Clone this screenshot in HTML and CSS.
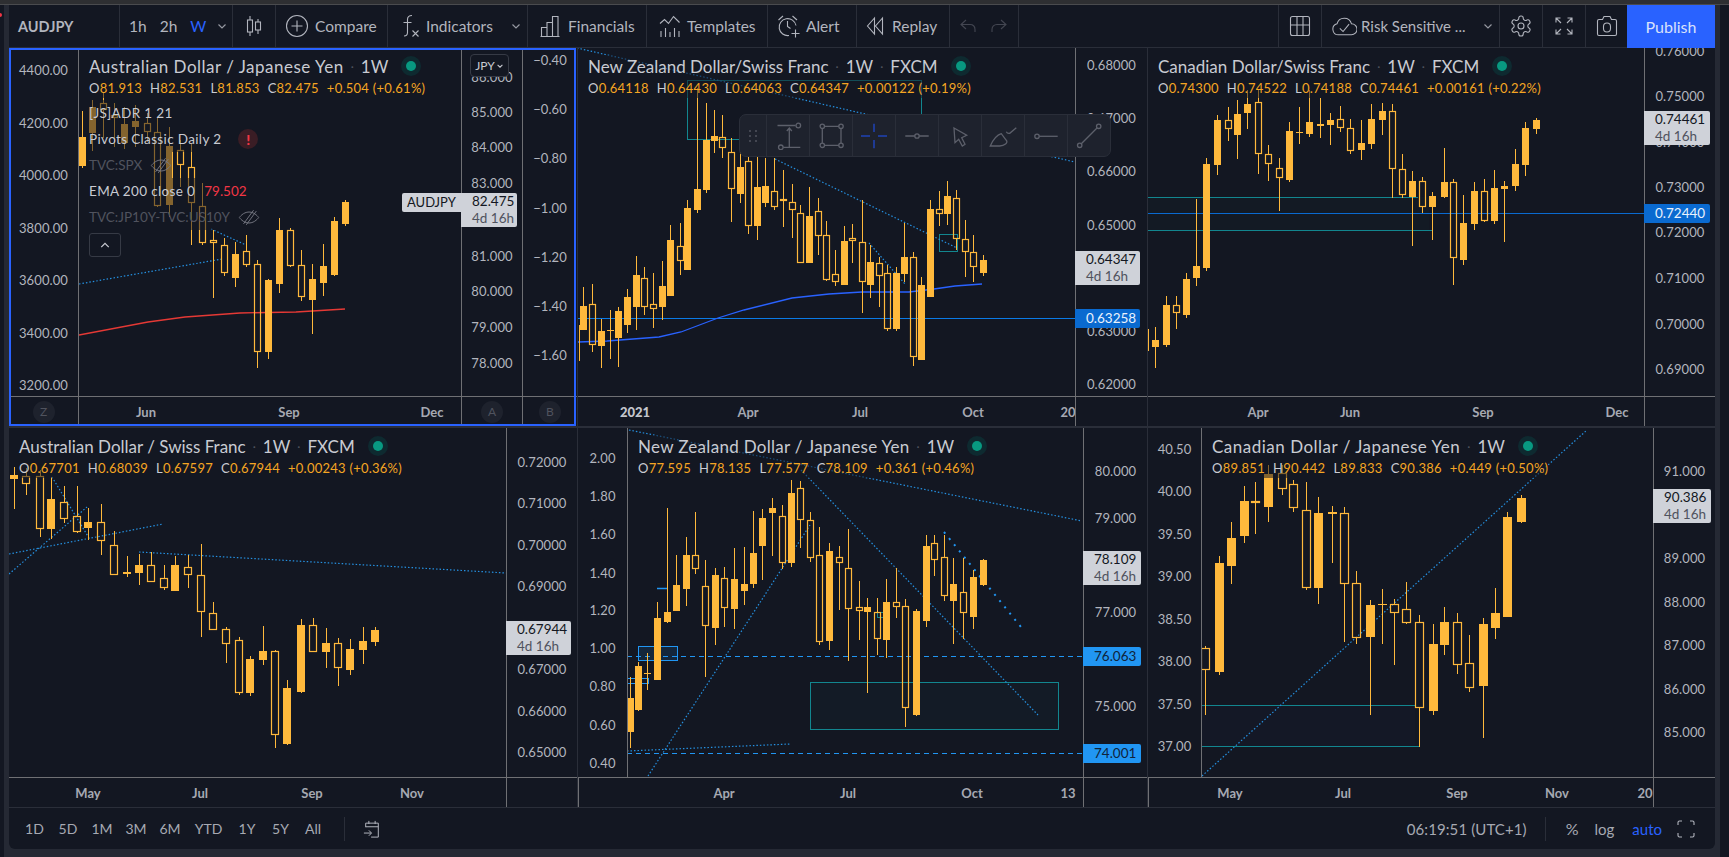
FILE: index.html
```html
<!DOCTYPE html>
<html lang="en">
<head>
<meta charset="utf-8">
<title>AUDJPY multi-chart layout</title>
<link rel="stylesheet" href="styles.css">
</head>
<body>
<div class="app">
  <div class="top-strip"></div>
  <span class="edge-badge"></span>
  <div class="workspace">
  <header class="toolbar">
    <div class="cell sym">AUDJPY</div>
    <div class="cell intervals"><span>1h</span><span>2h</span><span class="on">W</span>
      <svg class="chev" viewBox="0 0 10 10"><path d="M1.500 3.500L5 7l3.500-3.500"/></svg></div>
    <div class="cell mid"><svg class="ic" viewBox="0 0 24 24"><path d="M8 2v4M8 18v4M16 5v3M16 16v4"/><rect x="5.500" y="6" width="5" height="12"/><rect x="13.500" y="8" width="5" height="8"/></svg></div>
    <div class="cell compare"><svg class="ic" viewBox="0 0 24 24"><circle cx="12" cy="12" r="10.500"/><path d="M12 6.500v11M6.500 12h11"/></svg><span>Compare</span></div>
    <div class="cell indicators"><svg class="ic" viewBox="0 0 24 24"><path d="M15 1.500c-3.500 0-4.500 1.500-4.500 4v13c0 2.500-1 3.500-3.500 3.500M6.500 8.500h8M15.500 16.500l6 6M21.500 16.500l-6 6"/></svg><span>Indicators</span>
      <svg class="chev push" viewBox="0 0 10 10"><path d="M1.500 3.500L5 7l3.500-3.500"/></svg></div>
    <div class="cell financials"><svg class="ic" viewBox="0 0 24 24"><path d="M2.500 22.500h19M3.500 22.500v-9h5.500v9M9 22.500v-14h5.500v14M14.500 22.500v-20h5.500v20"/></svg><span>Financials</span></div>
    <div class="cell templates"><svg class="ic" viewBox="0 0 24 24"><path d="M2 9.500l4.500-4 4 4 5-7 6 6M3 23v-6M7.500 23v-9M12 23v-5M16.500 23v-9M21 23v-6"/></svg><span>Templates</span></div>
    <div class="cell alert"><svg class="ic" viewBox="0 0 24 24"><path d="M19 11.500a8.500 8.500 0 1 0-7 10M1.500 6l4.500-4M20 6l-4.500-4M10.500 7v5.500l3 2M18.500 15.500v8M14.500 19.500h8"/></svg><span>Alert</span></div>
    <div class="cell replay"><svg class="ic small" viewBox="0 0 18 24"><path d="M8.500 4L1.500 12l7 8zM16.500 4l-7 8 7 8z"/></svg><span>Replay</span></div>
    <div class="cell undo"><svg class="ic small mute" viewBox="0 0 18 24"><path d="M7 6L2 10.500l5 4.500M2 10.500h9c3 0 5 2 5 5v2.500"/></svg><svg class="ic small mute" viewBox="0 0 18 24"><path d="M11 6l5 4.500-5 4.500M16 10.500H7c-3 0-5 2-5 5v2.500"/></svg></div>
    <div class="cell spacer"></div>
    <div class="cell mid"><svg class="ic" viewBox="0 0 24 24"><rect x="2.500" y="2.500" width="19" height="19" rx="2"/><path d="M9 2.500v19M15 2.500v19M2.500 11h19"/></svg></div>
    <div class="cell layout"><svg class="ic wide" viewBox="0 0 28 24"><path d="M8 21.500a6 6 0 0 1-1.500-11.800A8 8 0 0 1 22 9.500a6 6 0 0 1 0 12zM9.500 14.500l3.500 3.500 6.500-8"/></svg><span>Risk Sensitive ...</span>
      <svg class="chev push" viewBox="0 0 10 10"><path d="M1.500 3.500L5 7l3.500-3.500"/></svg></div>
    <div class="cell mid"><svg class="ic" viewBox="0 0 24 24"><path d="M12.220 2h-.44a2 2 0 0 0-2 2v.18a2 2 0 0 1-1 1.730l-.43.25a2 2 0 0 1-2 0l-.15-.08a2 2 0 0 0-2.730.73l-.22.38a2 2 0 0 0 .73 2.730l.15.1a2 2 0 0 1 1 1.720v.51a2 2 0 0 1-1 1.740l-.15.09a2 2 0 0 0-.73 2.730l.22.38a2 2 0 0 0 2.730.73l.15-.08a2 2 0 0 1 2 0l.43.25a2 2 0 0 1 1 1.730V20a2 2 0 0 0 2 2h.44a2 2 0 0 0 2-2v-.18a2 2 0 0 1 1-1.730l.43-.25a2 2 0 0 1 2 0l.15.08a2 2 0 0 0 2.730-.73l.22-.39a2 2 0 0 0-.73-2.730l-.15-.08a2 2 0 0 1-1-1.740v-.5a2 2 0 0 1 1-1.740l.15-.09a2 2 0 0 0 .73-2.730l-.22-.38a2 2 0 0 0-2.730-.73l-.15.08a2 2 0 0 1-2 0l-.43-.25a2 2 0 0 1-1-1.730V4a2 2 0 0 0-2-2z"/><circle cx="12" cy="12" r="3"/></svg></div>
    <div class="cell mid"><svg class="ic" viewBox="0 0 24 24"><path d="M4 8.500V4h4.500M4 4l5 5M20 8.500V4h-4.500M20 4l-5 5M4 15.500V20h4.500M4 20l5-5M20 15.500V20h-4.500M20 20l-5-5"/></svg></div>
    <div class="cell mid"><svg class="ic" viewBox="0 0 24 24"><path d="M4 5.500h3.500L9 2.500h6l1.500 3H20a1.500 1.500 0 0 1 1.500 1.500v13a1.500 1.500 0 0 1-1.500 1.500H4A1.500 1.500 0 0 1 2.500 20V7A1.500 1.500 0 0 1 4 5.500z"/><rect x="8.500" y="9" width="7" height="9" rx="3.500"/></svg></div>
    <div class="cell publish">Publish</div>
  </header>

  <main class="charts">
    <section class="pane pane-a is-active" id="audjpy">
      <div class="axis left"></div>
      <div class="plot"><svg class="canvas"></svg>
        <div class="legend">
          <div class="lg-row lg-title"><span>Australian Dollar / Japanese Yen</span><i>·</i><span>1W</span><em class="dot"></em></div>
          <div class="lg-row lg-vals"><span><b>O</b>81.913</span><span><b>H</b>82.531</span><span><b>L</b>81.853</span><span><b>C</b>82.475</span><span>+0.504 (+0.61%)</span></div>
          <div class="lg-row lg-study">[JS]ADR 1 21</div>
          <div class="lg-row lg-study">Pivots Classic Daily 2<em class="warn">!</em></div>
          <div class="lg-row lg-study hidden">TVC:SPX<svg class="eye" viewBox="0 0 24 18"><path d="M1.500 9S5.500 3 12 3s10.500 6 10.500 6-4 6-10.500 6S1.500 9 1.500 9zM6 16L17 1M9 17L20 2"/></svg></div>
          <div class="lg-row lg-study">EMA 200 close 0<span class="red">79.502</span></div>
          <div class="lg-row lg-study hidden">TVC:JP10Y-TVC:US10Y<svg class="eye" viewBox="0 0 24 18"><path d="M1.500 9S5.500 3 12 3s10.500 6 10.500 6-4 6-10.500 6S1.500 9 1.500 9zM6 16L17 1M9 17L20 2"/></svg></div>
          <button class="collapse" type="button"><svg viewBox="0 0 12 8"><path d="M1.500 6L6 1.500 10.500 6"/></svg></button>
        </div>
      </div>
      <div class="axis"></div>
      <div class="axis"></div>
      <div class="corner"><span class="pin">Z</span></div>
      <div class="time"></div>
      <div class="corner"><span class="pin">A</span></div>
      <div class="corner"><span class="pin">B</span></div>
      <div class="jpy">JPY<svg viewBox="0 0 10 10"><path d="M2 3.500L5 6.500l3-3"/></svg></div>
    </section>

    <section class="pane pane-b" id="nzdchf">
      <div class="plot"><svg class="canvas"></svg>
        <div class="legend">
          <div class="lg-row lg-title"><span>New Zealand Dollar/Swiss Franc</span><i>·</i><span>1W</span><i>·</i><span>FXCM</span><em class="dot"></em></div>
          <div class="lg-row lg-vals"><span><b>O</b>0.64118</span><span><b>H</b>0.64430</span><span><b>L</b>0.64063</span><span><b>C</b>0.64347</span><span>+0.00122 (+0.19%)</span></div>
        </div>
      </div>
      <div class="axis"></div>
      <div class="time"></div>
      <div class="corner"></div>
    </section>

    <section class="pane pane-c" id="cadchf">
      <div class="plot"><svg class="canvas"></svg>
        <div class="legend">
          <div class="lg-row lg-title"><span>Canadian Dollar/Swiss Franc</span><i>·</i><span>1W</span><i>·</i><span>FXCM</span><em class="dot"></em></div>
          <div class="lg-row lg-vals"><span><b>O</b>0.74300</span><span><b>H</b>0.74522</span><span><b>L</b>0.74188</span><span><b>C</b>0.74461</span><span>+0.00161 (+0.22%)</span></div>
        </div>
      </div>
      <div class="axis"></div>
      <div class="time"></div>
      <div class="corner"></div>
    </section>

    <section class="pane pane-d lower" id="audchf">
      <div class="plot"><svg class="canvas"></svg>
        <div class="legend">
          <div class="lg-row lg-title"><span>Australian Dollar / Swiss Franc</span><i>·</i><span>1W</span><i>·</i><span>FXCM</span><em class="dot"></em></div>
          <div class="lg-row lg-vals"><span><b>O</b>0.67701</span><span><b>H</b>0.68039</span><span><b>L</b>0.67597</span><span><b>C</b>0.67944</span><span>+0.00243 (+0.36%)</span></div>
        </div>
      </div>
      <div class="axis"></div>
      <div class="time"></div>
      <div class="corner"></div>
    </section>

    <section class="pane pane-e lower" id="nzdjpy">
      <div class="axis left"></div>
      <div class="plot"><svg class="canvas"></svg>
        <div class="legend">
          <div class="lg-row lg-title"><span>New Zealand Dollar / Japanese Yen</span><i>·</i><span>1W</span><em class="dot"></em></div>
          <div class="lg-row lg-vals"><span><b>O</b>77.595</span><span><b>H</b>78.135</span><span><b>L</b>77.577</span><span><b>C</b>78.109</span><span>+0.361 (+0.46%)</span></div>
        </div>
      </div>
      <div class="axis"></div>
      <div class="corner"></div>
      <div class="time"></div>
      <div class="corner"></div>
    </section>

    <section class="pane pane-f lower" id="cadjpy">
      <div class="axis left"></div>
      <div class="plot"><svg class="canvas"></svg>
        <div class="legend">
          <div class="lg-row lg-title"><span>Canadian Dollar / Japanese Yen</span><i>·</i><span>1W</span><em class="dot"></em></div>
          <div class="lg-row lg-vals"><span><b>O</b>89.851</span><span><b>H</b>90.442</span><span><b>L</b>89.833</span><span><b>C</b>90.386</span><span>+0.449 (+0.50%)</span></div>
        </div>
      </div>
      <div class="axis"></div>
      <div class="corner"></div>
      <div class="time"></div>
      <div class="corner"></div>
    </section>

    <div class="draw-tools">
      <div class="tool grip"><svg viewBox="0 0 10 14"><path d="M1 1h2v2H1zM7 1h2v2H7zM1 6h2v2H1zM7 6h2v2H7zM1 11h2v2H1zM7 11h2v2H7z"/></svg></div>
      <div class="tool"><svg viewBox="0 0 28 28"><path d="M3.500 3.500h18M15.300 24.800V6M12.800 9l2.500-3 2.500 3M9.300 25.300h17"/><circle cx="24.300" cy="3.500" r="2.300"/><circle cx="6.800" cy="25.300" r="2.300"/></svg></div>
      <div class="tool"><svg viewBox="0 0 28 28"><path d="M7.500 4.300h14.300M7.500 23.300h14.300M5.300 6.500v14.500M24 6.500v14.500"/><circle cx="5.300" cy="4.300" r="2.200"/><circle cx="24" cy="4.300" r="2.200"/><circle cx="5.300" cy="23.300" r="2.200"/><circle cx="24" cy="23.300" r="2.200"/></svg></div>
      <div class="tool"><svg class="cross" viewBox="0 0 28 28"><path d="M14 1.700V10M14 18v8.300M1 14h9M18 14h9"/></svg></div>
      <div class="tool"><svg viewBox="0 0 28 28"><path d="M2.300 14h9.500M16.200 14h9.500"/><circle cx="14" cy="14" r="2.200"/></svg></div>
      <div class="tool"><svg viewBox="0 0 28 28"><path d="M8 6l12.700 7.300-5 2.400 3.300 6.600-2.700 1.700-3.600-6.700-3.700 3.400z"/></svg></div>
      <div class="tool"><svg viewBox="0 0 28 28"><path d="M1.300 24h9.400c4.600 0 8.800-3.300 6.600-5.700l-5-6.600C8 13 3.500 19 1.300 24zM17.300 9.700c.6 1.200 1.800 2 3.400 1.600l6.600-5.600"/></svg></div>
      <div class="tool"><svg viewBox="0 0 28 28"><path d="M7.200 14.300h18.500"/><circle cx="5" cy="14.300" r="2.200"/></svg></div>
      <div class="tool"><svg viewBox="0 0 28 28"><path d="M6.300 21.700L22 6"/><circle cx="4.700" cy="23.300" r="2.200"/><circle cx="23.700" cy="4.300" r="2.200"/></svg></div>
    </div>
  </main>

  <footer class="bottom">
    <nav class="ranges"><span>1D</span><span>5D</span><span>1M</span><span>3M</span><span>6M</span><span>YTD</span><span>1Y</span><span>5Y</span><span>All</span></nav>
    <div class="bar-div"></div>
    <svg class="ic cal" viewBox="0 0 20 20"><path d="M3 8V3.500h14V19h-8M3 7.500h14M6.500 1v3.500M13.500 1v3.500M1 14.500h8M6.500 11.500l3 3-3 3"/></svg>
    <div class="bottom-right">
      <span class="clock">06:19:51 (UTC+1)</span>
      <div class="bar-div"></div>
      <span class="pct">%</span><span class="log">log</span><span class="on auto">auto</span>
      <svg class="ic full" viewBox="0 0 20 20"><path d="M2 6V3.500A1.500 1.500 0 0 1 3.500 2H6M14 2h2.500A1.500 1.500 0 0 1 18 3.500V6M18 14v2.500a1.500 1.500 0 0 1-1.500 1.500H14M6 18H3.500A1.500 1.500 0 0 1 2 16.500V14"/></svg>
    </div>
  </footer>
  </div>
</div>
<script src="app.js"></script>
</body>
</html>
```
FILE: styles.css
```css
* { box-sizing: border-box; }
html, body { margin: 0; height: 100%; }
body {
  background: #131722;
  color: #b2b5be;
  font-family: Lato, "Noto Sans", sans-serif;
  overflow: hidden;
}
.app { position: relative; width: 1729px; height: 857px; display: flex; flex-direction: column; }
.top-strip { height: 5px; background: #2e2f32; border-bottom: 1px solid #4a4b4e; flex: none; }
.edge-badge { position: absolute; left: -2px; top: 13px; width: 4px; height: 4px; border-radius: 50%; background: #f23645; }
.workspace {
  flex: 1;
  margin: 0 9px 0 4px;
  padding: 0 5px 8px;
  background: #252934;
  display: flex;
  flex-direction: column;
}

/* top toolbar */
.toolbar {
  height: 43px;
  flex: none;
  background: #131722;
  border-bottom: 1px solid #2a2e39;
  display: grid;
  grid-template-columns: 110px 113px 43px 112px 140px 119px 121px 89px 93px 69px 1fr 43px 178px 43px 43px 42px 88px;
  font-size: 15.500px;
}
.cell { display: flex; align-items: center; border-left: 1px solid #2a2e39; padding-left: 9px; color: #b2b5be; }
.cell:first-child { border-left: 0; }
.sym { font-weight: 700; font-size: 14.500px; }
.intervals { gap: 13px; }
.on { color: #2962ff; }
.mid { justify-content: center; padding: 0; }
.spacer { border-left: 1px solid #2a2e39; }
.compare { gap: 6px; }
.indicators { gap: 5px; }
.financials { gap: 6px; padding-left: 10px; }
.templates { gap: 5px; padding-left: 11px; }
.alert { gap: 5px; }
.replay { gap: 8px; }
.undo { gap: 13px; }
.layout { gap: 4px; font-size: 15px; }
.layout .ic { width: 26px; }
.publish { background: #2962ff; color: #d8e1fb; justify-content: center; padding: 0; border: 0; font-size: 16px; margin-bottom: -1px; }
.ic { width: 24px; height: 24px; fill: none; stroke: #b2b5be; stroke-width: 1.100; flex: none; }
.ic.small { width: 18px; }
.ic.mute { stroke: #434651; }
.chev { width: 10px; height: 10px; fill: none; stroke: #9598a1; stroke-width: 1.200; flex: none; }
.push { margin-left: auto; margin-right: 6px; }
.intervals .chev { margin-left: -2px; }

/* chart grid */
.charts {
  position: relative;
  flex: none;
  height: 759px;
  display: grid;
  grid-template-columns: 568px 570px 568px;
  grid-template-rows: 378px 381px;
  background: #131722;
}
.pane { position: relative; display: grid; grid-template-rows: 1fr 30px; min-width: 0; background: #131722; }
.pane-b, .pane-c, .pane-e, .pane-f { border-left: 1px solid #2a2e39; }
.lower { border-top: 2px solid #2a2e39; }
.pane-a { grid-template-columns: 70px 382px 61px 55px; }
.pane-b { grid-template-columns: 1fr 72px; }
.pane-c { grid-template-columns: 1fr 71px; }
.pane-d { grid-template-columns: 1fr 71px; }
.pane-e { grid-template-columns: 50px 1fr 64px; }
.pane-f { grid-template-columns: 54px 1fr 62px; }
.is-active::after {
  content: "";
  position: absolute;
  inset: 0 1px 0 0;
  border: 2px solid #2962ff;
  pointer-events: none;
}
.plot { position: relative; min-width: 0; overflow: hidden; }
.canvas { display: block; width: 100%; height: 100%; }
.axis { position: relative; border-left: 1px solid #6f7074; overflow: hidden; font-size: 13px; letter-spacing: .1px; color: #b2b5be; }
.axis.left { border-left: 0; border-right: 1px solid #6f7074; }
.tick { position: absolute; left: 0; right: 0; text-align: center; line-height: 16px; transform: translateY(-8px); white-space: nowrap; }
.time { position: relative; border-top: 1px solid #6f7074; font-size: 13px; font-weight: 700; color: #a6a9b2; overflow: hidden; }
.time span { position: absolute; top: 7px; transform: translateX(-50%); line-height: 16px; }
.time .year { font-weight: 900; color: #c3c6cd; }
.corner { position: relative; border-top: 1px solid #6f7074; border-left: 1px solid #6f7074; display: flex; align-items: center; justify-content: center; }
.pane-a > .corner:nth-of-type(5), .pane-e > .corner:first-of-type, .pane-f > .corner:first-of-type { border-left: 0; border-right: 1px solid #6f7074; }
.pin { width: 22px; height: 22px; border-radius: 50%; background: #1e222d; color: #50535e; font-size: 12px; display: flex; align-items: center; justify-content: center; }

/* legend */
.legend { position: absolute; left: 10px; top: 7px; display: flex; flex-direction: column; align-items: flex-start; }
.lg-row { background: rgba(19, 23, 34, .52); display: flex; align-items: center; white-space: nowrap; }
.lg-title { height: 22px; font-size: 17px; color: #c9cbd2; gap: 7px; }
.lg-title i { font-style: normal; color: #50535e; font-size: 12px; }
.pane-a .lg-title span:first-child { letter-spacing: .5px; }
.pane-f .lg-title span:first-child { letter-spacing: .5px; }
.pane-e .lg-title span:first-child { letter-spacing: .3px; }
.lg-vals { height: 21px; font-size: 13px; color: #f5a623; gap: 8px; letter-spacing: .25px; }
.lg-vals b { font-weight: 400; color: #c9cbd2; }
.lg-study { height: 26px; font-size: 13.500px; color: #c9cbd2; gap: 11px; letter-spacing: .35px; }
.lg-study:nth-child(3) { margin-top: 2px; }
.hidden { color: #50535e; letter-spacing: 0; gap: 7px; }
.red { color: #f23645; margin-left: -2px; letter-spacing: 0; }
.dot { position: relative; width: 20px; height: 20px; border-radius: 50%; background: #0e2a30; margin-left: 6px; }
.dot::after { content: ""; position: absolute; left: 5px; top: 5px; width: 10px; height: 10px; border-radius: 50%; background: #089981; }
.warn { width: 20px; height: 20px; border-radius: 50%; background: #3a1d25; color: #f23645; font-style: normal; font-weight: 900; font-size: 14px; display: flex; align-items: center; justify-content: center; margin-left: 6px; }
.eye { width: 22px; height: 17px; fill: none; stroke: #787b86; stroke-width: 1; margin-left: 1px; }
.collapse { width: 32px; height: 24px; margin-top: 3px; padding: 0; background: #131722; border: 1px solid #363a45; border-radius: 3px; display: flex; align-items: center; justify-content: center; }
.collapse svg { width: 10px; height: 7px; fill: none; stroke: #c9cbd2; stroke-width: 1.500; }

/* price tags */
.jpy { position: absolute; left: 461px; top: 6px; width: 39px; height: 23px; background: #131722; border: 1px solid #363a45; border-radius: 4px; font-size: 12px; display: flex; align-items: center; justify-content: center; gap: 1px; color: #c9cbd2; z-index: 2; }
.jpy svg { width: 8px; height: 8px; fill: none; stroke: #c9cbd2; stroke-width: 1.300; }
.tag { position: absolute; z-index: 3; font-size: 13.500px; line-height: 17px; padding: 0 0 0 11px; color: #131722; white-space: nowrap; border-radius: 0 2px 2px 0; }
.tag small { display: block; font-size: 13.500px; color: #50535e; }
.tag.light { background: #cfd2d9; }
.tag.name { padding: 0 0 0 5px; border-radius: 2px 0 0 2px; font-size: 13px; line-height: 19px; }
.tag.blue { background: #0a6ad0; color: #eaf2fd; }
.tag.sky { background: #2196f3; color: #10233a; }

/* floating drawing tools */
.draw-tools {
  position: absolute;
  left: 730px;
  top: 66px;
  width: 372px;
  height: 43px;
  display: flex;
  background: #1e222d;
  border: 1px solid #2a2e39;
  border-radius: 7px;
  z-index: 5;
}
.tool { width: 43px; flex: none; display: flex; align-items: center; justify-content: center; border-left: 1px solid #2a2e39; }
.tool.grip { width: 26px; border-left: 0; }
.tool svg { width: 28px; height: 28px; fill: none; stroke: #5d606b; stroke-width: 1.300; }
.tool.grip svg { width: 10px; height: 14px; fill: #434651; stroke: none; }
.tool svg.cross { stroke: #1e3a94; stroke-width: 2; }

/* bottom bar */
.bottom {
  height: 42px;
  flex: none;
  background: #131722;
  border-top: 1px solid #2a2e39;
  border-radius: 0 0 6px 6px;
  display: flex;
  align-items: center;
  font-size: 14px;
  color: #a6a9b2;
}
.ranges { display: grid; grid-template-columns: 33px 34px 34px 34px 34px 43px 34px 33px 32px; margin-left: 9px; text-align: center; }
.bar-div { width: 1px; height: 24px; background: #2a2e39; margin: 0 18px 0 15px; }
.cal { width: 18px; height: 18px; }
.bottom-right { margin-left: auto; display: flex; align-items: center; gap: 15px; padding-right: 19px; font-size: 15px; }
.clock { letter-spacing: .1px; }
.bottom-right .bar-div { margin: 0 0 0 3px; }
.pct { font-size: 16px; margin-left: 5px; }
.log { margin-left: 1px; }
.auto { margin-left: 3px; }
.full { width: 20px; height: 20px; margin-left: -1px; }
```
FILE: app.js
```js
/* Candle rows: [x, high, bodyTop, bodyBottom, low, filled]. Coordinates are
   read off the chart image: page = origin + value / scale. */
var AMBER = '#ffb93c', TEAL = '#12868f', DOT = '#2590e0';

var CHARTS = {
  audjpy: {
    map: [0, 0, 1, 1], body: 7,
    candles: [
      [82,111,137,166,168,1],[92,100,107,133,151,1],[103,92,103,110,138,0],[114,103,115,118,147,0],
      [124,107,124,143,149,1],[135,105,121,127,147,1],[147,113,123,132,142,0],[157,117,132,206,207,0],
      [169,127,146,205,217,1],[180,140,150,165,187,0],[191,143,167,203,245,0],[202,183,206,243,245,0],
      [213,230,240,243,298,0],[224,238,245,273,276,0],[235,242,254,278,287,1],[246,235,251,265,267,0],
      [257,260,264,352,368,0],[268,279,280,352,359,1],[279,218,230,284,293,1],[290,228,230,266,267,0],
      [301,250,265,297,301,0],[312,264,279,300,334,1],[323,244,266,283,296,1],[334,217,221,275,276,1],
      [345,200,202,224,226,1]
    ],
    draw: [
      ['line', '#e53935', 1.300, [[79,335],[148,322],[185,317],[240,313],[296,312],[345,309]]],
      ['dots', DOT, 1.200, [[79,284],[222,259]]],
      ['dots', DOT, 1.200, [[211,229],[246,245]]]
    ],
    ticks: [
      [0,'4400.00',70],[0,'4200.00',123],[0,'4000.00',175],[0,'3800.00',228],[0,'3600.00',280],[0,'3400.00',333],[0,'3200.00',385],
      [1,'86.000',77],[1,'85.000',112],[1,'84.000',147],[1,'83.000',183],[1,'81.000',256],[1,'80.000',291],[1,'79.000',327],[1,'78.000',363],
      [2,'\u22120.40',60],[2,'\u22120.60',109],[2,'\u22120.80',158],[2,'\u22121.00',208],[2,'\u22121.20',257],[2,'\u22121.40',306],[2,'\u22121.60',355]
    ],
    time: [['Jun',146],['Sep',289],['Dec',432]],
    tags: [
      { name: 'AUDJPY', x: 402, y: 193, w: 59, h: 19 },
      { t: '82.475', sub: '4d 16h', x: 461, y: 193, w: 56, h: 34 }
    ]
  },
  nzdchf: {
    map: [570, 100, 2.703, 3], body: 7,
    candles: [
      [36,560,618,690,690,1],[60,552,613,734,755,0],[85,658,693,738,803,1],[107,630,690,692,778,1],
      [131,620,633,714,800,1],[155,568,591,675,700,1],[178,468,525,621,690,1],[201,500,535,622,645,0],
      [225,520,613,626,684,0],[248,483,558,621,660,1],[271,376,420,587,587,1],[296,368,439,482,525,0],
      [317,300,325,510,510,1],[342,-36,267,330,338,1],[367,10,120,270,278,1],[388,30,108,122,160,1],
      [412,45,110,143,173,0],[436,115,157,266,365,0],[459,140,202,281,310,1],[482,170,184,377,402,0],
      [506,170,262,377,420,1],[528,175,258,308,320,1],[552,175,272,320,330,0],[577,210,298,304,380,0],
      [599,252,305,329,414,0],[623,315,340,488,490,0],[647,262,349,489,490,1],[669,295,334,407,465,0],
      [693,362,406,539,542,0],[717,450,523,545,558,0],[740,378,424,554,555,1],[763,372,414,422,490,0],
      [788,300,427,545,640,0],[810,435,487,554,595,1],[834,470,490,527,620,0],[858,495,520,686,692,0],
      [880,500,519,688,692,1],[904,368,472,521,547,1],[928,456,472,770,797,0],[950,530,555,779,780,1],
      [974,300,327,590,590,1],[998,272,328,341,378,0],[1020,243,288,341,375,1],[1044,270,295,418,450,0],
      [1069,360,418,457,530,0],[1090,405,457,500,545,0],[1115,465,481,518,527,1]
    ],
    wicks: [[23,675,782]],
    draw: [
      ['hline', '#0a7ae6', 1, 655, 20, 1364],
      ['line', '#2962ff', 1.300, [[22,727],[100,722],[240,710],[300,697],[400,655],[470,630],[600,595],[700,582],[790,576],[850,575],[915,575],[985,568],[1040,558],[1113,553]]],
      ['box', TEAL, 'none', 317, -60, 950, 118],
      ['box', TEAL, 'none', 998, 403, 1045, 452],
      ['dots', DOT, 1.200, [[20,-156],[1364,186]]],
      ['dots', DOT, 1.200, [[553,176],[1045,445]]],
      ['dots', DOT, 1.200, [[808,430],[905,552]]]
    ],
    ticks: [[0,'0.68000',65],[0,'0.67000',118],[0,'0.66000',171],[0,'0.65000',225],[0,'0.63000',331],[0,'0.62000',384]],
    time: [['2021',635,1],['Apr',748],['Jul',860],['Oct',973],['20',1068]],
    tags: [
      { t: '0.64347', sub: '4d 16h', x: 1075, y: 251, w: 65, h: 34 },
      { t: '0.63258', x: 1075, y: 309, w: 65, h: 19, cls: 'blue' }
    ]
  },
  cadchf: {
    map: [1140, 60, 2.662, 3], body: 7,
    candles: [
      [41,800,840,860,923,1],[68,708,735,855,862,1],[95,708,736,758,806,0],[123,640,657,765,773,1],
      [150,417,618,653,678,1],[177,294,312,623,632,1],[206,165,180,315,345,1],[233,140,181,208,243,0],
      [259,120,162,224,297,1],[286,90,132,158,207,1],[315,90,127,281,341,0],[342,255,281,311,362,0],
      [369,295,325,353,453,0],[396,186,213,360,366,1],[424,140,216,220,252,1],[451,90,186,221,231,1],
      [478,113,192,197,234,1],[507,158,180,195,255,1],[533,138,178,205,215,0],[560,178,205,272,282,0],
      [587,180,249,270,300,1],[616,132,177,252,267,1],[643,128,153,180,225,1],[670,132,154,328,413,0],
      [698,282,328,404,414,0],[725,333,363,411,557,1],[752,352,364,440,459,0],[778,396,408,441,540,1],
      [808,265,366,411,414,1],[834,357,367,593,675,0],[861,405,489,600,615,1],[890,367,393,491,510,1],
      [917,357,394,483,485,0],[943,330,384,483,492,1],[970,363,378,386,546,1],[999,267,312,378,393,1],
      [1026,186,204,315,348,1],[1053,174,180,207,222,1]
    ],
    wicks: [[21,808,872]],
    draw: [
      ['fill', 'rgba(18,134,143,.03)', 18, 412, 770, 511],
      ['hline', TEAL, 1, 412, 18, 740],
      ['hline', TEAL, 1, 511, 18, 778],
      ['hline', '#0a6ad0', 1, 460, 18, 1342]
    ],
    ticks: [[0,'0.76000',51],[0,'0.75000',96],[0,'0.74000',142],[0,'0.73000',187],[0,'0.72000',232],[0,'0.71000',278],[0,'0.70000',324],[0,'0.69000',369]],
    time: [['Apr',1258],['Jun',1350],['Sep',1483],['Dec',1617]],
    tags: [
      { t: '0.74461', sub: '4d 16h', x: 1644, y: 111, w: 66, h: 34 },
      { t: '0.72440', x: 1644, y: 204, w: 66, h: 19, cls: 'blue' }
    ]
  },
  audchf: {
    map: [0, 430, 2.703, 3], body: 8,
    candles: [
      [38,110,136,147,237,1],[71,115,139,163,195,0],[107,120,139,296,320,0],[139,140,207,296,327,1],
      [172,168,217,266,280,0],[207,168,259,305,309,0],[239,234,277,293,330,1],[274,222,277,334,375,0],
      [307,303,346,434,434,0],[342,378,426,432,440,1],[375,372,405,429,465,1],[409,367,406,455,455,0],
      [442,405,445,473,480,0],[474,378,405,483,483,1],[509,375,412,436,474,0],[542,342,436,547,621,0],
      [577,516,550,599,599,0],[610,590,598,641,699,0],[645,622,631,790,794,0],[677,678,688,788,798,1],
      [712,588,663,689,705,1],[744,660,664,914,954,0],[777,750,774,942,945,1],[813,568,585,786,789,1],
      [845,564,586,665,665,0],[880,594,639,666,714,1],[913,624,640,713,768,0],[947,628,657,720,735,1],
      [980,591,633,659,702,1],[1013,590,600,635,648,1]
    ],
    draw: [
      ['dots', DOT, 1.200, [[24,372],[440,281]]],
      ['dots', DOT, 1.200, [[24,432],[235,230]]],
      ['dots', DOT, 1.200, [[140,140],[240,325]]],
      ['dots', DOT, 1.200, [[375,366],[1368,428]]]
    ],
    ticks: [[0,'0.72000',462],[0,'0.71000',503],[0,'0.70000',545],[0,'0.69000',586],[0,'0.67000',669],[0,'0.66000',711],[0,'0.65000',752]],
    time: [['May',88],['Jul',200],['Sep',312],['Nov',412]],
    tags: [{ t: '0.67944', sub: '4d 16h', x: 506, y: 621, w: 65, h: 34 }]
  },
  nzdjpy: {
    map: [570, 430, 2.703, 3], body: 7,
    candles: [
      [161,740,805,905,953,1],[185,697,708,840,843,1],[209,670,730,732,780,1],[236,517,565,749,749,1],
      [261,235,547,575,578,1],[287,375,466,542,542,1],[314,322,376,476,528,1],[339,247,376,418,432,0],
      [366,390,469,587,740,0],[391,414,436,593,645,1],[417,410,445,535,590,0],[442,355,448,536,597,1],
      [469,350,462,483,525,1],[494,243,370,461,475,1],[520,237,265,347,450,1],[547,205,234,248,378,1],
      [572,225,259,398,418,0],[598,150,190,398,410,1],[623,153,175,271,355,0],[650,247,271,385,395,0],
      [674,292,376,635,645,0],[701,340,364,632,660,1],[727,348,380,400,540,0],[752,297,415,538,692,0],
      [780,453,530,544,630,0],[804,505,532,545,790,1],[831,505,547,628,675,0],[855,447,517,629,683,1],
      [882,413,517,530,563,0],[906,507,529,835,890,0],[934,538,544,855,857,1],[961,315,349,572,590,1],
      [985,316,338,391,438,0],[1012,315,382,499,512,0],[1036,385,463,512,642,1],[1063,385,487,550,628,0],
      [1088,420,441,560,597,1],[1115,388,391,466,468,1]
    ],
    draw: [
      ['hline', '#2196f3', 1, 679, 153, 1388, '5 4'],
      ['hline', '#2196f3', 1, 970, 153, 1388, '5 4'],
      ['box', TEAL, 'rgba(18,134,143,.04)', 650, 757, 1320, 898],
      ['box', '#2196f3', 'rgba(33,150,243,.12)', 185, 647, 288, 691],
      ['box', '#2196f3', 'none', 155, 745, 210, 758],
      ['box', TEAL, 'none', 831, 547, 856, 562],
      ['hline', '#2196f3', 1.500, 473, 235, 262],
      ['dots', DOT, 1.200, [[210,1038],[648,285]]],
      ['dots', DOT, 1.200, [[160,0],[1385,274]]],
      ['dots', DOT, 1.200, [[625,120],[1265,855]]],
      ['dots', DOT, 1.200, [[155,962],[595,943]]],
      ['dots', '#2196f3', 2, [[1010,305],[1218,590]], '2 6']
    ],
    ticks: [
      [0,'2.00',458],[0,'1.80',496],[0,'1.60',534],[0,'1.40',573],[0,'1.20',610],[0,'1.00',648],[0,'0.80',686],[0,'0.60',725],[0,'0.40',763],
      [1,'80.000',471],[1,'79.000',518],[1,'77.000',612],[1,'75.000',706]
    ],
    time: [['Apr',724],['Jul',848],['Oct',972],['13',1068]],
    tags: [
      { t: '78.109', sub: '4d 16h', x: 1083, y: 551, w: 58, h: 34 },
      { t: '76.063', x: 1083, y: 647, w: 58, h: 19, cls: 'sky' },
      { t: '74.001', x: 1083, y: 744, w: 58, h: 19, cls: 'sky' }
    ]
  },
  cadjpy: {
    map: [1140, 430, 2.662, 3], body: 9,
    candles: [
      [174,648,655,721,855,0],[209,378,400,725,735,1],[241,276,324,407,462,1],[276,168,213,317,338,1],
      [307,155,214,220,312,0],[342,105,132,231,276,1],[377,105,130,176,195,0],[408,150,163,235,245,0],
      [443,155,241,473,480,0],[475,201,249,473,522,1],[510,228,246,251,400,1],[544,231,250,461,636,0],
      [576,423,460,623,641,0],[611,510,525,621,855,1],[643,477,522,526,642,1],[677,508,523,548,705,0],
      [709,456,538,578,582,0],[744,555,577,835,952,0],[779,582,642,842,855,1],[810,531,576,645,675,1],
      [845,549,577,704,732,0],[877,615,700,773,785,0],[912,564,582,768,924,1],[946,474,549,594,627,1],
      [978,246,261,561,561,1],[1013,195,204,276,279,1]
    ],
    draw: [
      ['fill', 'rgba(33,60,120,.05)', 163, 826, 733, 949],
      ['hline', TEAL, 1, 826, 163, 733],
      ['hline', TEAL, 1, 949, 163, 744],
      ['dots', DOT, 1.200, [[165,1038],[1190,0]]]
    ],
    ticks: [
      [0,'40.50',449],[0,'40.00',491],[0,'39.50',534],[0,'39.00',576],[0,'38.50',619],[0,'38.00',661],[0,'37.50',704],[0,'37.00',746],
      [1,'91.000',471],[1,'89.000',558],[1,'88.000',602],[1,'87.000',645],[1,'86.000',689],[1,'85.000',732]
    ],
    time: [['May',1230],['Jul',1343],['Sep',1457],['Nov',1557],['20',1645]],
    tags: [{ t: '90.386', sub: '4d 16h', x: 1653, y: 489, w: 58, h: 34 }]
  }
};

function renderChart(id, c) {
  var pane = document.getElementById(id);
  var paneBox = pane.getBoundingClientRect();
  var plot = pane.querySelector('.plot');
  var box = plot.getBoundingClientRect();
  var svg = pane.querySelector('.canvas');
  svg.setAttribute('viewBox', [box.left, box.top, box.width, box.height].join(' '));

  var X = function (v) { return Math.round(c.map[0] + v / c.map[2]); };
  var Y = function (v) { return Math.round(c.map[1] + v / c.map[3]); };
  var out = '';

  (c.draw || []).forEach(function (d) {
    var kind = d[0];
    if (kind === 'line' || kind === 'dots') {
      var pts = d[3].map(function (p) { return X(p[0]) + ',' + Y(p[1]); }).join(' ');
      var dash = kind === 'dots' ? ' stroke-dasharray="' + (d[4] || '1.500 2') + '"' : '';
      out += '<polyline points="' + pts + '" fill="none" stroke="' + d[1] + '" stroke-width="' + d[2] + '"' + dash + '/>';
    } else if (kind === 'hline') {
      var y = Y(d[3]) + .5;
      out += '<line x1="' + X(d[4]) + '" x2="' + X(d[5]) + '" y1="' + y + '" y2="' + y + '" stroke="' + d[1] +
        '" stroke-width="' + d[2] + '"' + (d[6] ? ' stroke-dasharray="' + d[6] + '"' : '') + '/>';
    } else if (kind === 'box') {
      out += '<rect x="' + (X(d[3]) + .5) + '" y="' + (Y(d[4]) + .5) + '" width="' + (X(d[5]) - X(d[3])) + '" height="' +
        (Y(d[6]) - Y(d[4])) + '" fill="' + d[2] + '" stroke="' + d[1] + '"/>';
    } else if (kind === 'fill') {
      out += '<rect x="' + X(d[2]) + '" y="' + Y(d[3]) + '" width="' + (X(d[4]) - X(d[2])) + '" height="' +
        (Y(d[5]) - Y(d[3])) + '" fill="' + d[1] + '"/>';
    }
  });

  (c.wicks || []).forEach(function (w) {
    out += '<line x1="' + (X(w[0]) + .5) + '" x2="' + (X(w[0]) + .5) + '" y1="' + Y(w[1]) + '" y2="' + Y(w[2]) + '" stroke="' + AMBER + '"/>';
  });

  c.candles.forEach(function (k) {
    var x = X(k[0]), hi = Y(k[1]), top = Y(k[2]), bot = Y(k[3]), lo = Y(k[4]);
    var half = Math.floor(c.body / 2), left = x - half, w = c.body;
    if (bot <= top) bot = top + 1;
    out += '<path d="M' + (x + .5) + ' ' + hi + 'V' + top + 'M' + (x + .5) + ' ' + bot + 'V' + lo + '" stroke="' + AMBER + '" fill="none"/>';
    if (k[5]) {
      out += '<rect x="' + left + '" y="' + top + '" width="' + w + '" height="' + (bot - top) + '" fill="' + AMBER + '"/>';
    } else {
      out += '<rect x="' + (left + .5) + '" y="' + (top + .5) + '" width="' + (w - 1) + '" height="' + Math.max(bot - top - 1, 1) +
        '" fill="none" stroke="' + AMBER + '" stroke-width="1.200"/>';
    }
  });
  svg.innerHTML = out;

  var axes = pane.querySelectorAll('.axis');
  c.ticks.forEach(function (t) {
    var axis = axes[t[0]], el = document.createElement('span');
    el.className = 'tick';
    el.textContent = t[1];
    el.style.top = (t[2] - axis.getBoundingClientRect().top) + 'px';
    axis.appendChild(el);
  });

  var time = pane.querySelector('.time');
  var timeBox = time.getBoundingClientRect();
  c.time.forEach(function (t) {
    var el = document.createElement('span');
    el.textContent = t[0];
    if (t[2]) el.className = 'year';
    el.style.left = (t[1] - timeBox.left) + 'px';
    time.appendChild(el);
  });

  c.tags.forEach(function (t) {
    var el = document.createElement('div');
    el.className = 'tag ' + (t.name ? 'light name' : (t.cls || 'light'));
    el.textContent = t.name || t.t;
    if (t.sub) {
      var sub = document.createElement('small');
      sub.textContent = t.sub;
      el.appendChild(sub);
    } else if (!t.name) {
      el.style.lineHeight = t.h + 'px';
    }
    el.style.left = (t.x - paneBox.left - pane.clientLeft) + 'px';
    el.style.top = (t.y - paneBox.top - pane.clientTop) + 'px';
    el.style.width = t.w + 'px';
    el.style.height = t.h + 'px';
    pane.appendChild(el);
  });
}

Object.keys(CHARTS).forEach(function (id) { renderChart(id, CHARTS[id]); });
```
